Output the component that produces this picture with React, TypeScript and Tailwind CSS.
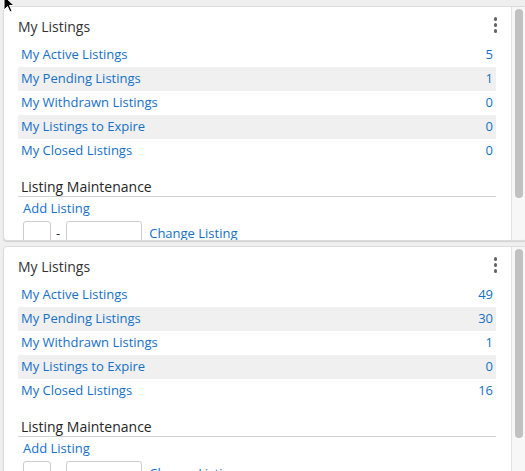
import React from "react";

type Row = { label: string; value: number };

const font = { fontFamily: '"Open Sans", "Liberation Sans", sans-serif' };

function Card({ rows }: { rows: Row[] }) {
  return (
    <div className="flex h-[235px] shrink-0 overflow-hidden rounded-[4px] border border-[#dcdcdc] bg-white shadow-[0_1px_1px_rgba(0,0,0,0.12)]">
      <div className="flex-1 pl-[14px] pr-[15px]">
        <div className="flex items-start justify-between pt-[10px] pb-[6px]">
          <div className="text-[14px] leading-[20px] text-[#333333]">My Listings</div>
          <div className="mr-[-1px] flex flex-col items-center gap-[2.5px]">
            <span className="block h-[3.5px] w-[3.5px] rounded-full bg-[#666666]" />
            <span className="block h-[3.5px] w-[3.5px] rounded-full bg-[#666666]" />
            <span className="block h-[3.5px] w-[3.5px] rounded-full bg-[#666666]" />
          </div>
        </div>
        <div className="flex flex-col">
          {rows.map((r, i) => (
            <div
              key={r.label}
              className={
                "flex h-[24px] items-center justify-between pl-[3px] pr-[3px] text-[13px] text-[#1570c8] " +
                (i % 2 === 1 ? "bg-[#f0f0f0]" : "bg-white")
              }
            >
              <span>{r.label}</span>
              <span>{r.value}</span>
            </div>
          ))}
        </div>
        <div className="mt-[14px] border-b border-[#d2d2d2] pl-[3px] text-[14px] leading-[19px] text-[#262626]">
          Listing Maintenance
        </div>
        <div className="pl-[5px]">
          <div className="h-[24px] text-[13px] leading-[23px] text-[#1570c8]">Add Listing</div>
          <div className="flex items-start">
            <div className="h-[26px] w-[28px] rounded-[3px] border border-[#cccccc] bg-white" />
            <span className="ml-[5px] mr-[6px] text-[13px] leading-[24px] text-[#333333]">-</span>
            <div className="h-[26px] w-[76px] rounded-[3px] border border-[#cccccc] bg-white" />
            <span className="ml-[7px] text-[13px] leading-[24px] text-[#1570c8]">Change Listing</span>
          </div>
        </div>
      </div>
      <div className="w-[15px] shrink-0 border-l border-[#e4e4e4] bg-[#f7f7f7] pl-[3px] pt-[2px]">
        <div className="h-[189px] w-[8px] rounded-full bg-[#c1c1c1]" />
      </div>
    </div>
  );
}

export default function App() {
  const a: Row[] = [
    { label: "My Active Listings", value: 5 },
    { label: "My Pending Listings", value: 1 },
    { label: "My Withdrawn Listings", value: 0 },
    { label: "My Listings to Expire", value: 0 },
    { label: "My Closed Listings", value: 0 },
  ];
  const b: Row[] = [
    { label: "My Active Listings", value: 49 },
    { label: "My Pending Listings", value: 30 },
    { label: "My Withdrawn Listings", value: 1 },
    { label: "My Listings to Expire", value: 0 },
    { label: "My Closed Listings", value: 16 },
  ];
  return (
    <div
      className="relative h-[471px] w-[525px] overflow-hidden bg-[#efefef]"
      style={font}
    >
      <div className="mr-[-2px] flex flex-col gap-[5px] pl-[3px] pt-[6px]">
        <Card rows={a} />
        <Card rows={b} />
      </div>
      <svg
        className="absolute left-[3px] top-[-5px]"
        width="12"
        height="19"
        viewBox="0 0 12 19"
      >
        <path
          d="M1 1 L1 15 L4.5 11.5 L7 17 L9 16 L6.5 10.5 L11 10.5 Z"
          fill="#000"
          stroke="#fff"
          strokeWidth="1"
          strokeLinejoin="round"
        />
      </svg>
    </div>
  );
}
